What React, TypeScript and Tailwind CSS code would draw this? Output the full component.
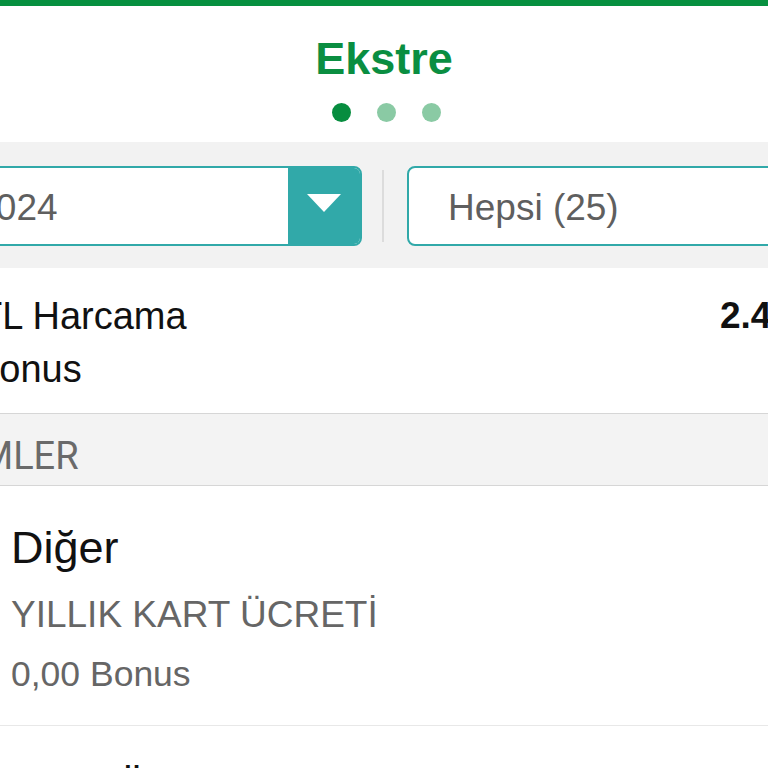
import React from "react";

const sans = { fontFamily: '"Liberation Sans", Arial, sans-serif' };

function Dot({ active }: { active?: boolean }) {
  return (
    <span
      className={
        "block w-[19px] h-[19px] rounded-full " +
        (active ? "bg-[#078d3f]" : "bg-[#8acaa4]")
      }
    />
  );
}

function ItemRow({ title, sub, bonus }: { title: string; sub: string; bonus: string }) {
  return (
    <div className="flex flex-col pl-[11px] pt-[39px] pb-[32px] border-b border-[#e8e8e8]">
      <div className="text-[45px] leading-none text-[#111111]">{title}</div>
      <div className="mt-[26px] text-[37px] leading-none text-[#666666]">{sub}</div>
      <div className="mt-[24px] text-[35.5px] leading-none text-[#666666]">{bonus}</div>
    </div>
  );
}

export default function App() {
  return (
    <div className="w-[768px] h-[768px] overflow-hidden bg-white" style={sans}>
      <div className="h-[6px] bg-[#06903f]" />

      <div className="flex flex-col items-center pt-[30px]">
        <h1 className="text-[45px] leading-none font-bold text-[#0a8e41]">Ekstre</h1>
        <div className="flex gap-[26px] mt-[22px] pl-[4px]">
          <Dot active />
          <Dot />
          <Dot />
        </div>
      </div>

      <div className="mt-[20px] bg-[#f2f2f2] flex items-center pt-[24px] pb-[22px]">
        <div className="-ml-[152px] w-[514px] shrink-0 h-[80px] flex border-2 border-[#31a9a9] rounded-[8px] overflow-hidden bg-white">
          <div className="flex-1 flex items-center pl-[41px] pt-[4px] text-[37px] text-[#5f5f5f] whitespace-nowrap">
            Mart 2024
          </div>
          <div className="w-[72px] bg-[#31a9a9] flex items-center justify-center">
            <svg width="34" height="18" viewBox="0 0 34 18" className="mb-[6px]">
              <polygon points="0,0 34,0 17,18" fill="#ffffff" />
            </svg>
          </div>
        </div>
        <div className="ml-[20px] mr-[23px] w-[2px] h-[72px] bg-[#dcdcdc] shrink-0" />
        <div className="w-[514px] shrink-0 h-[80px] flex items-center border-2 border-[#31a9a9] rounded-[8px] bg-white pl-[39px] pt-[4px] text-[37px] text-[#5f5f5f] whitespace-nowrap">
          Hepsi (25)
        </div>
      </div>

      <div className="flex flex-col pt-[29px] pb-[25px] whitespace-nowrap">
        <div className="flex -ml-[21px]">
          <div className="w-[741px] shrink-0 text-[38px] leading-none text-[#111111]">TL Harcama</div>
          <div className="text-[37px] leading-none font-bold text-[#111111]">2.456,78 TL</div>
        </div>
        <div className="flex -ml-[26px] mt-[15px]">
          <div className="text-[38px] leading-none text-[#111111]">Bonus</div>
        </div>
      </div>

      <div className="h-[73px] border-y border-[#d6d6d6] bg-[#f3f3f3] pt-[23px] whitespace-nowrap">
        <div
          className="-ml-[95px] text-[38px] leading-none text-[#6a6a6a]"
          style={{ fontFamily: "Roboto, sans-serif" }}
        >
          İŞLEMLER
        </div>
      </div>

      <ItemRow title="Diğer" sub="YILLIK KART ÜCRETİ" bonus="0,00 Bonus" />
      <ItemRow title="Borç Ücreti" sub="ÜCRET" bonus="0,00 Bonus" />
    </div>
  );
}
